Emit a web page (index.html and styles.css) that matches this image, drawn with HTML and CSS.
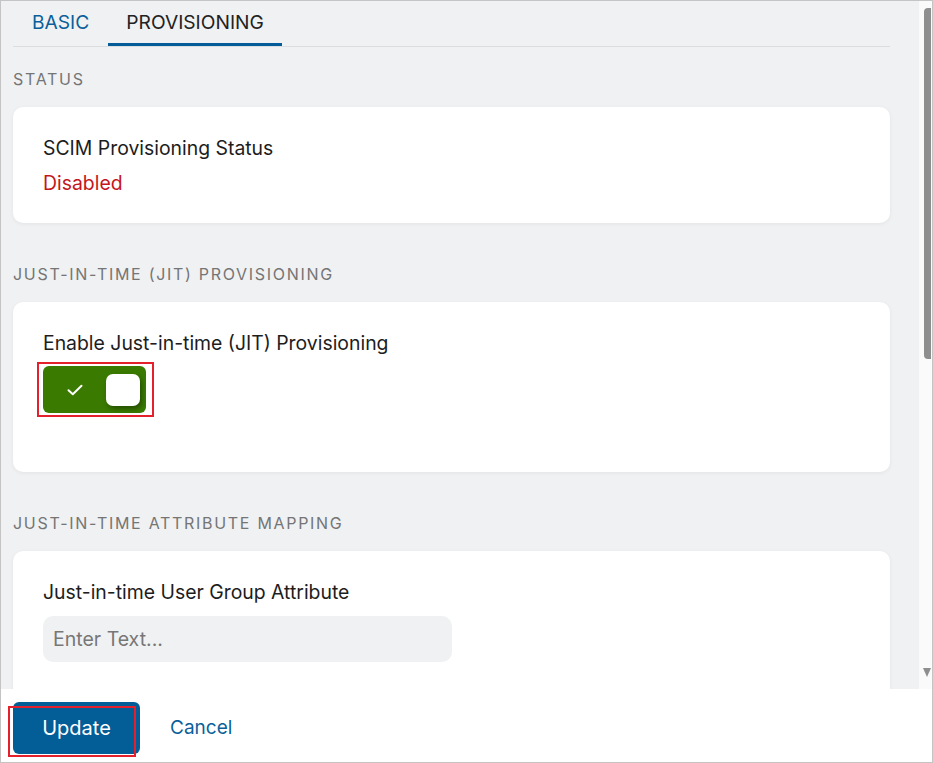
FILE: index.html
```html
<!DOCTYPE html>
<html lang="en">
<head>
<meta charset="utf-8">
<title>Provisioning</title>
<link rel="stylesheet" href="styles.css">
</head>
<body>
<div class="frame">
  <div class="scroll-area">
    <div class="content">
      <div class="tabs">
        <div class="tab">BASIC</div>
        <div class="tab active">PROVISIONING</div>
      </div>

      <div class="section-title first">STATUS</div>
      <div class="card card-status">
        <div class="label">SCIM Provisioning Status</div>
        <div class="status-disabled">Disabled</div>
      </div>

      <div class="section-title">JUST-IN-TIME (JIT) PROVISIONING</div>
      <div class="card card-jit">
        <div class="label">Enable Just-in-time (JIT) Provisioning</div>
        <div class="toggle-wrap">
          <div class="toggle">
            <svg class="check" width="18" height="14" viewBox="0 0 18 14"><path d="M2.5 7.2 L6.8 11.2 L15.5 2.8" fill="none" stroke="#ffffff" stroke-width="2" stroke-linecap="round" stroke-linejoin="round"/></svg>
            <div class="knob"></div>
          </div>
          <div class="highlight hl-toggle"></div>
        </div>
      </div>

      <div class="section-title">JUST-IN-TIME ATTRIBUTE MAPPING</div>
      <div class="card card-map">
        <div class="label">Just-in-time User Group Attribute</div>
        <div class="input">Enter Text...</div>
      </div>
    </div>
    <div class="scrollbar">
      <div class="thumb"></div>
      <div class="arrow-down"></div>
    </div>
  </div>
  <div class="footer">
    <div class="btn-wrap">
      <div class="btn-update">Update</div>
      <div class="highlight hl-update"></div>
    </div>
    <div class="btn-cancel">Cancel</div>
  </div>
</div>
</body>
</html>
```

FILE: styles.css
```css
html, body {
  margin: 0;
  padding: 0;
  background: #ffffff;
}
body {
  font-family: Inter, "Noto Sans", sans-serif;
  color: #1d1d1d;
}
.frame {
  width: 931px;
  height: 761px;
  border: 1px solid #c4c4c4;
  display: flex;
  flex-direction: column;
  overflow: hidden;
  background: #ffffff;
}
.scroll-area {
  height: 688px;
  display: flex;
  flex-direction: row;
  overflow: hidden;
}
.content {
  width: 918px;
  background: #f0f1f3;
  padding: 0 29px 0 12px;
  box-sizing: border-box;
  overflow: hidden;
}
.tabs {
  display: flex;
  border-bottom: 1px solid #dcdde0;
  height: 45px;
}
.tab {
  padding: 0 19px;
  font-size: 19.2px;
  line-height: 43px;
  color: #0b5f9a;
  border-bottom: 3px solid transparent;
}
.tab.active {
  color: #222222;
  border-bottom-color: #035b97;
  padding: 0 18px;
}
.section-title {
  font-size: 16px;
  letter-spacing: 1.7px;
  color: #757575;
  margin: 41px 0 0 0;
  line-height: 20px;
  height: 38px;
}
.section-title.first {
  margin-top: 22px;
}
.card {
  background: #ffffff;
  border-radius: 10px;
  box-shadow: 0 1px 4px rgba(0, 0, 0, 0.06);
  padding: 29px 30px 0 30px;
  box-sizing: border-box;
}
.card-status {
  height: 116px;
}
.card-jit {
  height: 170px;
}
.card-map {
  height: 200px;
  border-radius: 10px 10px 0 0;
}
.label {
  font-size: 19.4px;
  line-height: 24px;
  color: #1d1d1d;
}
.status-disabled {
  font-size: 19.4px;
  line-height: 24px;
  color: #c4161c;
  margin-top: 11px;
}
.toggle-wrap {
  position: relative;
  width: 103px;
  margin-top: 11px;
}
.toggle {
  width: 103px;
  height: 47px;
  background: #3a7a00;
  border-radius: 6px;
  display: flex;
  align-items: center;
  box-sizing: border-box;
  padding: 0 6px 0 23px;
}
.check {
  display: block;
}
.knob {
  width: 34px;
  height: 32px;
  background: #ffffff;
  border-radius: 7px;
  margin-left: auto;
  box-shadow: 2px 3px 5px rgba(0, 0, 0, 0.35);
}
.highlight {
  position: absolute;
  border: 2px solid #e3202b;
  box-sizing: border-box;
  pointer-events: none;
}
.hl-toggle {
  left: -6px;
  top: -4px;
  width: 117px;
  height: 55px;
}
.input {
  margin-top: 12px;
  width: 409px;
  height: 46px;
  background: #f0f1f3;
  border-radius: 10px;
  box-sizing: border-box;
  padding: 0 10px;
  font-size: 19.5px;
  line-height: 46px;
  color: #777777;
}
.scrollbar {
  width: 13px;
  background: #fafafa;
  position: relative;
}
.thumb {
  position: absolute;
  left: 5px;
  top: 7px;
  width: 7px;
  height: 351px;
  background: #8e8e8e;
  border-radius: 4px 0 0 4px;
}
.arrow-down {
  position: absolute;
  left: 4px;
  top: 667px;
  width: 0;
  height: 0;
  border-left: 4px solid transparent;
  border-right: 4px solid transparent;
  border-top: 9px solid #8e8e8e;
}
.footer {
  flex: 1;
  display: flex;
  align-items: center;
  padding: 5px 0 0 12px;
  gap: 30px;
  background: #ffffff;
}
.btn-wrap {
  position: relative;
}
.btn-update {
  width: 127px;
  height: 52px;
  background: #035d97;
  color: #ffffff;
  border-radius: 6px;
  font-size: 20px;
  line-height: 52px;
  text-align: center;
}
.hl-update {
  left: -5px;
  top: 4px;
  width: 128px;
  height: 51px;
}
.btn-cancel {
  font-size: 19px;
  color: #0b5f9a;
  line-height: 52px;
}
```
